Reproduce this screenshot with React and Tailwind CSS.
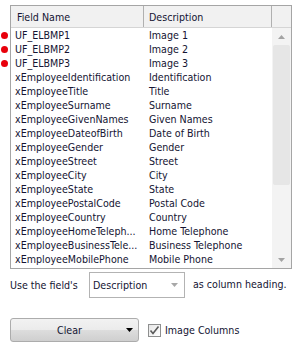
import React from "react";

const rows = [
  ["UF_ELBMP1", "Image 1", true],
  ["UF_ELBMP2", "Image 2", true],
  ["UF_ELBMP3", "Image 3", true],
  ["xEmployeeIdentification", "Identification"],
  ["xEmployeeTitle", "Title"],
  ["xEmployeeSurname", "Surname"],
  ["xEmployeeGivenNames", "Given Names"],
  ["xEmployeeDateofBirth", "Date of Birth"],
  ["xEmployeeGender", "Gender"],
  ["xEmployeeStreet", "Street"],
  ["xEmployeeCity", "City"],
  ["xEmployeeState", "State"],
  ["xEmployeePostalCode", "Postal Code"],
  ["xEmployeeCountry", "Country"],
  ["xEmployeeHomeTeleph...", "Home Telephone"],
  ["xEmployeeBusinessTele...", "Business Telephone"],
  ["xEmployeeMobilePhone", "Mobile Phone"],
  ["xEmployeeEmail", "Email"],
];

const font = { fontFamily: "Tahoma, 'DejaVu Sans Condensed', 'Liberation Sans', sans-serif" };

export default function App() {
  return (
    <div
      className="w-[297px] h-[354px] bg-white text-[10.6px] leading-[14px] text-[#141432] overflow-hidden"
      style={font}
    >
      <div className="flex pt-[5px]">
        {/* marker column */}
        <div className="w-[10px] pt-[23px] flex flex-col">
          {rows.slice(0, 3).map((r, i) => (
            <div key={i} className="h-[14px] flex items-center pl-[1px]">
              <div className="w-[7px] h-[7px] rounded-full bg-[#e8000b]" />
            </div>
          ))}
        </div>
        {/* list */}
        <div className="w-[282px] h-[264px] border border-[#a5a5a5] flex flex-col overflow-hidden">
          <div className="h-[22px] shrink-0 flex bg-[#f1f1f1] border-b border-[#d5d5d5]">
            <div className="w-[133px] border-r border-[#b0b0b0] pl-[6px] flex items-center">Field Name</div>
            <div className="w-[128px] border-r border-[#b0b0b0] pl-[5px] flex items-center">Description</div>
            <div className="flex-1" />
          </div>
          <div className="flex flex-1 min-h-0">
            <div className="w-[261px] flex flex-col overflow-hidden">
              {rows.map(([f, d], i) => (
                <div key={i} className="h-[14px] shrink-0 flex whitespace-nowrap">
                  <div className="w-[133px] pl-[4px] overflow-hidden">{f}</div>
                  <div className="w-[128px] pl-[5px] overflow-hidden">{d}</div>
                </div>
              ))}
            </div>
            {/* scrollbar */}
            <div className="flex-1 bg-[#f3f3f3] flex flex-col items-stretch px-[1px]">
              <div className="h-[17px] flex items-center justify-center">
                <svg width="7" height="4" viewBox="0 0 7 4"><path d="M0 4 L3.5 0 L7 4 Z" fill="#a3a3a3" /></svg>
              </div>
              <div className="h-[140px] bg-[#e6e6e6] rounded-[2px]" />
              <div className="flex-1" />
              <div className="h-[17px] flex items-center justify-center">
                <svg width="7" height="4" viewBox="0 0 7 4"><path d="M0 0 L7 0 L3.5 4 Z" fill="#a3a3a3" /></svg>
              </div>
            </div>
          </div>
        </div>
      </div>

      {/* use field's row */}
      <div className="flex items-center pl-[10px] mt-[3px] h-[26px]">
        <span className="w-[79px]">Use the field's</span>
        <div className="w-[96px] h-[26px] border border-[#b3b3b3] flex items-center pl-[3px] pr-[6px]">
          <span className="flex-1">Description</span>
          <svg width="7" height="4" viewBox="0 0 7 4"><path d="M0 0 L7 0 L3.5 4 Z" fill="#a8a8a8" /></svg>
        </div>
        <span className="ml-[8px] -mt-[3px]">as column heading.</span>
      </div>

      {/* bottom row */}
      <div className="flex items-center pl-[10px] mt-[20px]">
        <div className="w-[129px] h-[24px] rounded-[3px] border border-[#acacac] flex items-center bg-[linear-gradient(#f2f2f2_0%,#ebebeb_50%,#dddddd_50%,#cfcfcf_100%)]">
          <span className="flex-1 text-center pl-[2px]">Clear</span>
          <svg className="mr-[5px]" width="7" height="4" viewBox="0 0 7 4"><path d="M0 0 L7 0 L3.5 4 Z" fill="#000" /></svg>
        </div>
        <div className="ml-[9px] flex items-center">
          <div className="w-[13px] h-[13px] border border-[#8e8f8f] bg-[linear-gradient(135deg,#e6e6e6,#ffffff)] flex items-center justify-center">
            <svg width="11" height="11" viewBox="0 0 11 11">
              <path d="M1.5 5.5 L4 8.5 L9.5 1.5" stroke="#5a5a5a" strokeWidth="1.6" fill="none" />
            </svg>
          </div>
          <span className="ml-[4px]">Image Columns</span>
        </div>
      </div>
    </div>
  );
}
